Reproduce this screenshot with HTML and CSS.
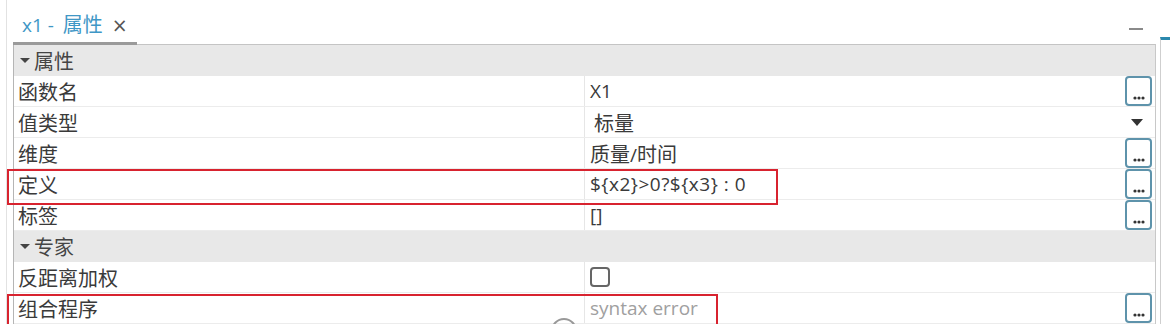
FILE: index.html
```html
<!DOCTYPE html>
<html lang="zh">
<head>
  <meta charset="UTF-8">
  <title>x1 - 属性</title>
  <link rel="stylesheet" href="styles.css">
</head>
<body>
  <div class="view">
    <div class="panel">
      <div class="tabbar">
        <div class="tab"><span class="lat">x1 - </span>属性<span class="close">×</span></div>
        <div class="minimize"></div>
      </div>

      <div class="grid">
        <div class="section"><span class="caret"></span>属性</div>

        <div class="row">
          <div class="key">函数名</div>
          <div class="val"><span class="lat">X1</span><span class="dots"><svg width="12" height="4" viewBox="0 0 12 4"><circle cx="2" cy="2" r="1.6"/><circle cx="6" cy="2" r="1.6"/><circle cx="10" cy="2" r="1.6"/></svg></span></div>
        </div>
        <div class="row">
          <div class="key">值类型</div>
          <div class="val"><span class="indent">标量</span><span class="drop"></span></div>
        </div>
        <div class="row">
          <div class="key">维度</div>
          <div class="val"><span>质量<span class="lat">/</span>时间</span><span class="dots"><svg width="12" height="4" viewBox="0 0 12 4"><circle cx="2" cy="2" r="1.6"/><circle cx="6" cy="2" r="1.6"/><circle cx="10" cy="2" r="1.6"/></svg></span></div>
        </div>
        <div class="row">
          <div class="key">定义</div>
          <div class="val"><span class="lat wide">${x2}&gt;0?${x3} : 0</span><span class="dots"><svg width="12" height="4" viewBox="0 0 12 4"><circle cx="2" cy="2" r="1.6"/><circle cx="6" cy="2" r="1.6"/><circle cx="10" cy="2" r="1.6"/></svg></span></div>
        </div>
        <div class="row">
          <div class="key">标签</div>
          <div class="val"><span class="lat">[]</span><span class="dots"><svg width="12" height="4" viewBox="0 0 12 4"><circle cx="2" cy="2" r="1.6"/><circle cx="6" cy="2" r="1.6"/><circle cx="10" cy="2" r="1.6"/></svg></span></div>
        </div>

        <div class="section"><span class="caret"></span>专家</div>

        <div class="row">
          <div class="key">反距离加权</div>
          <div class="val"><span class="check"></span></div>
        </div>
        <div class="row">
          <div class="key">组合程序</div>
          <div class="val"><span class="lat muted">syntax error</span><span class="dots"><svg width="12" height="4" viewBox="0 0 12 4"><circle cx="2" cy="2" r="1.6"/><circle cx="6" cy="2" r="1.6"/><circle cx="10" cy="2" r="1.6"/></svg></span></div>
        </div>
      </div>
    </div>
    <div class="side"></div>
  </div>

  <!-- annotation boxes drawn over the table -->
  <div class="mark mark-def"></div>
  <div class="mark mark-prog"></div>
  <div class="cursor"></div>
</body>
</html>
```

FILE: styles.css
```css
body {
  margin: 0;
  background: #fff;
  font-family: "Noto Sans CJK SC", sans-serif;
  font-size: 20px;
  color: #3a3a3a;
  height: 324px;
  overflow: hidden;
  position: relative;
}
.view {
  display: flex;
  height: 324px;
  overflow: hidden;
}
.panel {
  margin-left: 6px;
  padding-left: 6px;
  border-left: 1px solid #e2e2e2;
  width: 1143px;
}
.lat {
  font-family: "Open Sans", "Noto Sans", sans-serif;
  font-size: 19px;
}
.wide {
  letter-spacing: 0.5px;
}
.tabbar {
  height: 44px;
  display: flex;
  align-items: flex-end;
  justify-content: space-between;
}
.tab {
  width: 124px;
  padding-left: 9px;
  height: 40px;
  line-height: 38px;
  color: #3f97c6;
  border-bottom: 3px solid #9a9a9a;
  box-sizing: border-box;
  margin-bottom: -1px;
  position: relative;
  z-index: 1;
  white-space: nowrap;
}
.tab .lat {
  font-size: 19px;
  margin-right: 4px;
}
.close {
  color: #555;
  font-family: "DejaVu Sans", sans-serif;
  font-size: 19px;
  margin-left: 9px;
}
.minimize {
  width: 14px;
  height: 2px;
  background: #8a8a8a;
  margin: 0 13px 14px 0;
}
.grid {
  border-top: 1px solid #c4c4c4;
  border-left: 1px solid #b5b5b5;
  border-right: 1px solid #c8c8c8;
  height: 280px;
}
.section {
  height: 31px;
  background: #e8e8e8;
  display: flex;
  align-items: center;
  padding-left: 6px;
  color: #444;
}
.caret {
  width: 0;
  height: 0;
  border-left: 5px solid transparent;
  border-right: 5px solid transparent;
  border-top: 5px solid #444;
  margin-right: 4px;
}
.row {
  display: grid;
  grid-template-columns: 570px 1fr;
  height: 31px;
  border-bottom: 1px solid #ececec;
  box-sizing: border-box;
}
.key {
  padding-left: 4px;
  display: flex;
  align-items: center;
}
.val {
  border-left: 1px solid #e6e6e6;
  padding-left: 5px;
  padding-right: 3px;
  display: flex;
  align-items: center;
  justify-content: space-between;
}
.indent {
  padding-left: 4px;
}
.muted {
  color: #a0a0a0;
}
.dots {
  width: 27px;
  height: 30px;
  box-sizing: border-box;
  border: 2px solid #5e93ab;
  border-radius: 4px;
  display: flex;
  align-items: flex-end;
  justify-content: center;
  padding-bottom: 4px;
  align-self: flex-start;
}
.dots svg {
  fill: #333;
}
.drop {
  width: 0;
  height: 0;
  border-left: 6px solid transparent;
  border-right: 6px solid transparent;
  border-top: 7px solid #333;
  margin-right: 9px;
}
.check {
  width: 20px;
  height: 20px;
  box-sizing: border-box;
  border: 2px solid #666;
  border-radius: 4px;
}
.side {
  margin-left: 4px;
  margin-top: 37px;
  flex: 1;
  border-left: 1px solid #cfcfcf;
  border-top: 3px solid #2a88ad;
}
.mark {
  position: absolute;
  border: 2px solid #d8232f;
}
.mark-def {
  left: 7px;
  top: 169px;
  width: 767px;
  height: 32px;
}
.mark-prog {
  left: 7px;
  top: 294px;
  width: 707px;
  height: 28px;
  border-bottom: none;
}
.cursor {
  position: absolute;
  left: 551px;
  top: 318px;
  width: 22px;
  height: 22px;
  border: 2px solid #999;
  border-radius: 50%;
}
```
